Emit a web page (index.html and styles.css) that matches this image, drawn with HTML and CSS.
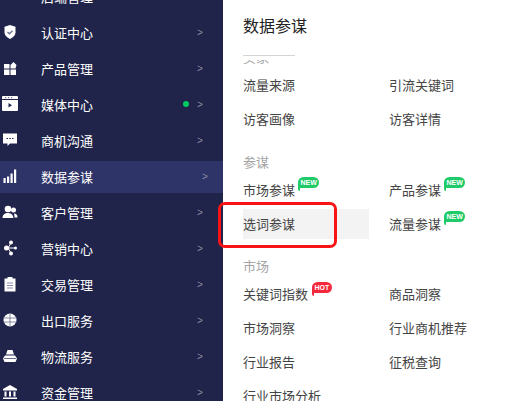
FILE: index.html
```html
<!doctype html>
<html lang="zh-CN">
    <head>
        <meta charset="utf-8" />
        <title>数据参谋</title>
        <link rel="stylesheet" href="styles.css">
    </head>

    <body>
        <div class="page">
            <nav class="sidebar">
                <div class="nav-item"><svg class="nav-icon" viewBox="0 0 16 16"><path d="M2 0h12v6H2z" fill="#fff"/></svg><span class="nav-text">后端管理</span><span class="nav-arrow">&gt;</span></div>
                <div class="nav-item"><svg class="nav-icon" viewBox="0 0 16 16"><path d="M8 1l5.500 1.800v5.700c0 3-2.500 5-5.500 6.500-3-1.500-5.500-3.500-5.500-6.500V2.800z" fill="#fff"/><path d="M5.500 8l2 1.800 3-3" fill="none" stroke="#6a6f90" stroke-width="1.300"/></svg><span class="nav-text">认证中心</span><span class="nav-arrow">&gt;</span></div>
                <div class="nav-item"><svg class="nav-icon" viewBox="0 0 16 16"><path d="M2 4h5.500v4.500H2zM2 9.500h5.500V15H2zM8.500 9.500H14V15H8.500zM8.500 8.500V5L11.500 2 14.500 5 13.500 8.500z" fill="#fff"/></svg><span class="nav-text">产品管理</span><span class="nav-arrow">&gt;</span></div>
                <div class="nav-item"><svg class="nav-icon" viewBox="0 0 16 16"><rect x="0" y="0" width="16" height="15" rx="1" fill="#fff"/><path d="M0 3.500h16" stroke="#20244a"/><path d="M3 1.700h1.200M6 1.700h1.200M9 1.700h1.200" stroke="#20244a" stroke-width=".8"/><path d="M6.500 7l3.500 2.300-3.500 2.300z" fill="#20244a"/></svg><span class="nav-text">媒体中心</span><span class="nav-dot"></span><span class="nav-arrow">&gt;</span></div>
                <div class="nav-item"><svg class="nav-icon" viewBox="0 0 16 16"><path d="M1 1.500h14v10H8l-2.500 2.500v-2.500H1z" fill="#fff"/><path d="M4.500 6.500h1.500M7.300 6.500h1.500M10 6.500h1.500" stroke="#20244a"/></svg><span class="nav-text">商机沟通</span><span class="nav-arrow">&gt;</span></div>
                <div class="nav-item active"><svg class="nav-icon" viewBox="0 0 16 16"><path d="M1.500 10h2.200v5H1.500zM5 8.500h2.200V15H5zM8.500 5.500h2.200V15H8.500zM12 1.500h2.200V15H12z" fill="#fff"/></svg><span class="nav-text">数据参谋</span><span class="nav-arrow">&gt;</span></div>
                <div class="nav-item"><svg class="nav-icon" viewBox="0 0 16 16"><circle cx="6" cy="5" r="3.300" fill="#fff"/><path d="M.5 14c0-3.500 2.300-5 5.500-5s5 1.500 5.500 5z" fill="#fff"/><circle cx="11.500" cy="6" r="2.500" fill="#fff"/><path d="M12 9.500c2 0 3.500 1 3.500 4h-3c0-1.500-.3-3-.5-4z" fill="#fff"/></svg><span class="nav-text">客户管理</span><span class="nav-arrow">&gt;</span></div>
                <div class="nav-item"><svg class="nav-icon" viewBox="0 0 16 16"><path d="M9 3L6 8l3 5M6 8h7" stroke="#fff" fill="none"/><circle cx="9" cy="2.500" r="2" fill="#fff"/><circle cx="4.500" cy="8" r="2.500" fill="#fff"/><circle cx="9" cy="13.500" r="2" fill="#fff"/><circle cx="13.500" cy="8" r="1.500" fill="#fff"/></svg><span class="nav-text">营销中心</span><span class="nav-arrow">&gt;</span></div>
                <div class="nav-item"><svg class="nav-icon" viewBox="0 0 16 16"><path d="M2.500 2.500h11v13h-11z" fill="#fff"/><path d="M5.500 1h5v2.500h-5z" fill="#fff"/><path d="M5 7h6M5 9.500h6M5 12h6" stroke="#8a8db0"/></svg><span class="nav-text">交易管理</span><span class="nav-arrow">&gt;</span></div>
                <div class="nav-item"><svg class="nav-icon" viewBox="0 0 16 16"><circle cx="8" cy="8" r="6.500" fill="#fff"/><path d="M1.500 6h13M1.500 10h13M8 1.500v13" stroke="#6a6f90" stroke-width=".8"/></svg><span class="nav-text">出口服务</span><span class="nav-arrow">&gt;</span></div>
                <div class="nav-item"><svg class="nav-icon" viewBox="0 0 16 16"><path d="M5.500 2h5l1.500 4.500H4zM3 7.500h10l2 3-1.500 3.500h-11L1 10.500z" fill="#fff"/><path d="M2 10.500h12" stroke="#6a6f90"/></svg><span class="nav-text">物流服务</span><span class="nav-arrow">&gt;</span></div>
                <div class="nav-item"><svg class="nav-icon" viewBox="0 0 16 16"><path d="M8 1l7 4v1.500H1V5zM2.500 7.500h2v5h-2zM7 7.500h2v5H7zM11.500 7.500h2v5h-2zM1 13.500h14V15H1z" fill="#fff"/></svg><span class="nav-text">资金管理</span><span class="nav-arrow">&gt;</span></div>
            </nav>

            <main class="panel">
                <h2 class="panel-title">数据参谋</h2>
                <div class="panel-rule"></div>
                <div class="panel-scroll">
                    <div class="group first">
                        <div class="group-title">买家</div>
                        <div class="links">
                            <a class="link">流量来源</a>
                            <a class="link">引流关键词</a>
                            <a class="link">访客画像</a>
                            <a class="link">访客详情</a>
                        </div>
                    </div>
                    <div class="group">
                        <div class="group-title">参谋</div>
                        <div class="links">
                            <a class="link">市场参谋<span class="tag new">NEW</span></a>
                            <a class="link">产品参谋<span class="tag new">NEW</span></a>
                            <a class="link hover">选词参谋</a>
                            <a class="link">流量参谋<span class="tag new">NEW</span></a>
                        </div>
                    </div>
                    <div class="group">
                        <div class="group-title">市场</div>
                        <div class="links">
                            <a class="link">关键词指数<span class="tag hot">HOT</span></a>
                            <a class="link">商品洞察</a>
                            <a class="link">市场洞察</a>
                            <a class="link">行业商机推荐</a>
                            <a class="link">行业报告</a>
                            <a class="link">征税查询</a>
                            <a class="link">行业市场分析</a>
                        </div>
                    </div>
                </div>
            </main>

            <div class="callout"></div>
        </div>
    </body>
</html>
```

FILE: styles.css
```css
html, body {
    margin: 0;
    padding: 0;
    background-color: white;
}
.page {
    position: relative;
    display: flex;
    width: 510px;
    height: 401px;
    overflow: hidden;
    font-family: "Liberation Sans", "Noto Sans CJK SC", sans-serif;
}
.sidebar {
    flex: none;
    width: 223px;
    height: 401px;
    overflow: hidden;
    background-color: #20244a;
}
.nav-item {
    display: flex;
    align-items: center;
    height: 36px;
    color: white;
    font-size: 13px;
}
.nav-item:first-child {
    margin-top: -22px;
}
.nav-item.active {
    box-sizing: border-box;
    height: 32px;
    margin: 3px 0 1px;
    padding-bottom: 2px;
    background-color: #2e3368;
}
.nav-icon {
    flex: none;
    width: 16px;
    height: 16px;
    margin-left: 2px;
}
.nav-text {
    margin-left: 23px;
    flex: 1;
}
.nav-dot {
    width: 6px;
    height: 6px;
    margin-right: 8px;
    border-radius: 50%;
    background-color: #00c95f;
}
.nav-arrow {
    width: 26px;
    color: #8a8ca0;
    font-size: 10px;
}
.nav-item.active .nav-arrow {
    width: 21px;
}
.panel {
    flex: 1;
    min-width: 0;
    padding-left: 20px;
    color: #222;
}
.panel-title {
    box-sizing: border-box;
    height: 55px;
    margin: 0;
    padding-top: 17px;
    font-size: 16px;
    line-height: 20px;
    font-weight: normal;
}
.panel-rule {
    width: 52px;
    height: 1px;
    margin-bottom: 4px;
    background-color: #d5d5d5;
}
.panel-scroll {
    height: 341px;
    overflow: hidden;
}
.group {
    margin-bottom: 17px;
}
.group.first {
    margin-top: -12px;
    margin-bottom: 18px;
}
.group-title {
    height: 20px;
    margin-bottom: -1px;
    color: #a5a5a5;
    font-size: 13px;
    line-height: 20px;
}
.links {
    display: grid;
    grid-template-columns: 146px 1fr;
    grid-auto-rows: 34px;
}
.link {
    display: flex;
    align-items: center;
    font-size: 13px;
    color: #444;
}
.link.hover {
    box-sizing: border-box;
    height: 30px;
    margin: 3px 20px 1px -20px;
    padding: 0 0 2px 20px;
    background-color: #f3f3f3;
}
.tag {
    position: relative;
    align-self: flex-start;
    height: 11px;
    margin: 5px 0 0 3px;
    padding: 0 2.5px;
    border-radius: 6px 6px 6px 0;
    color: white;
    font-size: 7px;
    font-weight: bold;
    line-height: 11px;
}
.tag::after {
    content: "";
    position: absolute;
    left: 0;
    top: 8px;
    width: 2px;
    height: 6px;
    border-radius: 0 0 0 2px;
    background-color: inherit;
}
.tag.new {
    background-color: #1fca68;
}
.tag.hot {
    margin: 6px 0 0 4px;
    background-color: #f5283c;
}
.callout {
    position: absolute;
    left: 218px;
    top: 202px;
    width: 113px;
    height: 40px;
    border: 3px solid #f81414;
    border-radius: 7px;
}
```
